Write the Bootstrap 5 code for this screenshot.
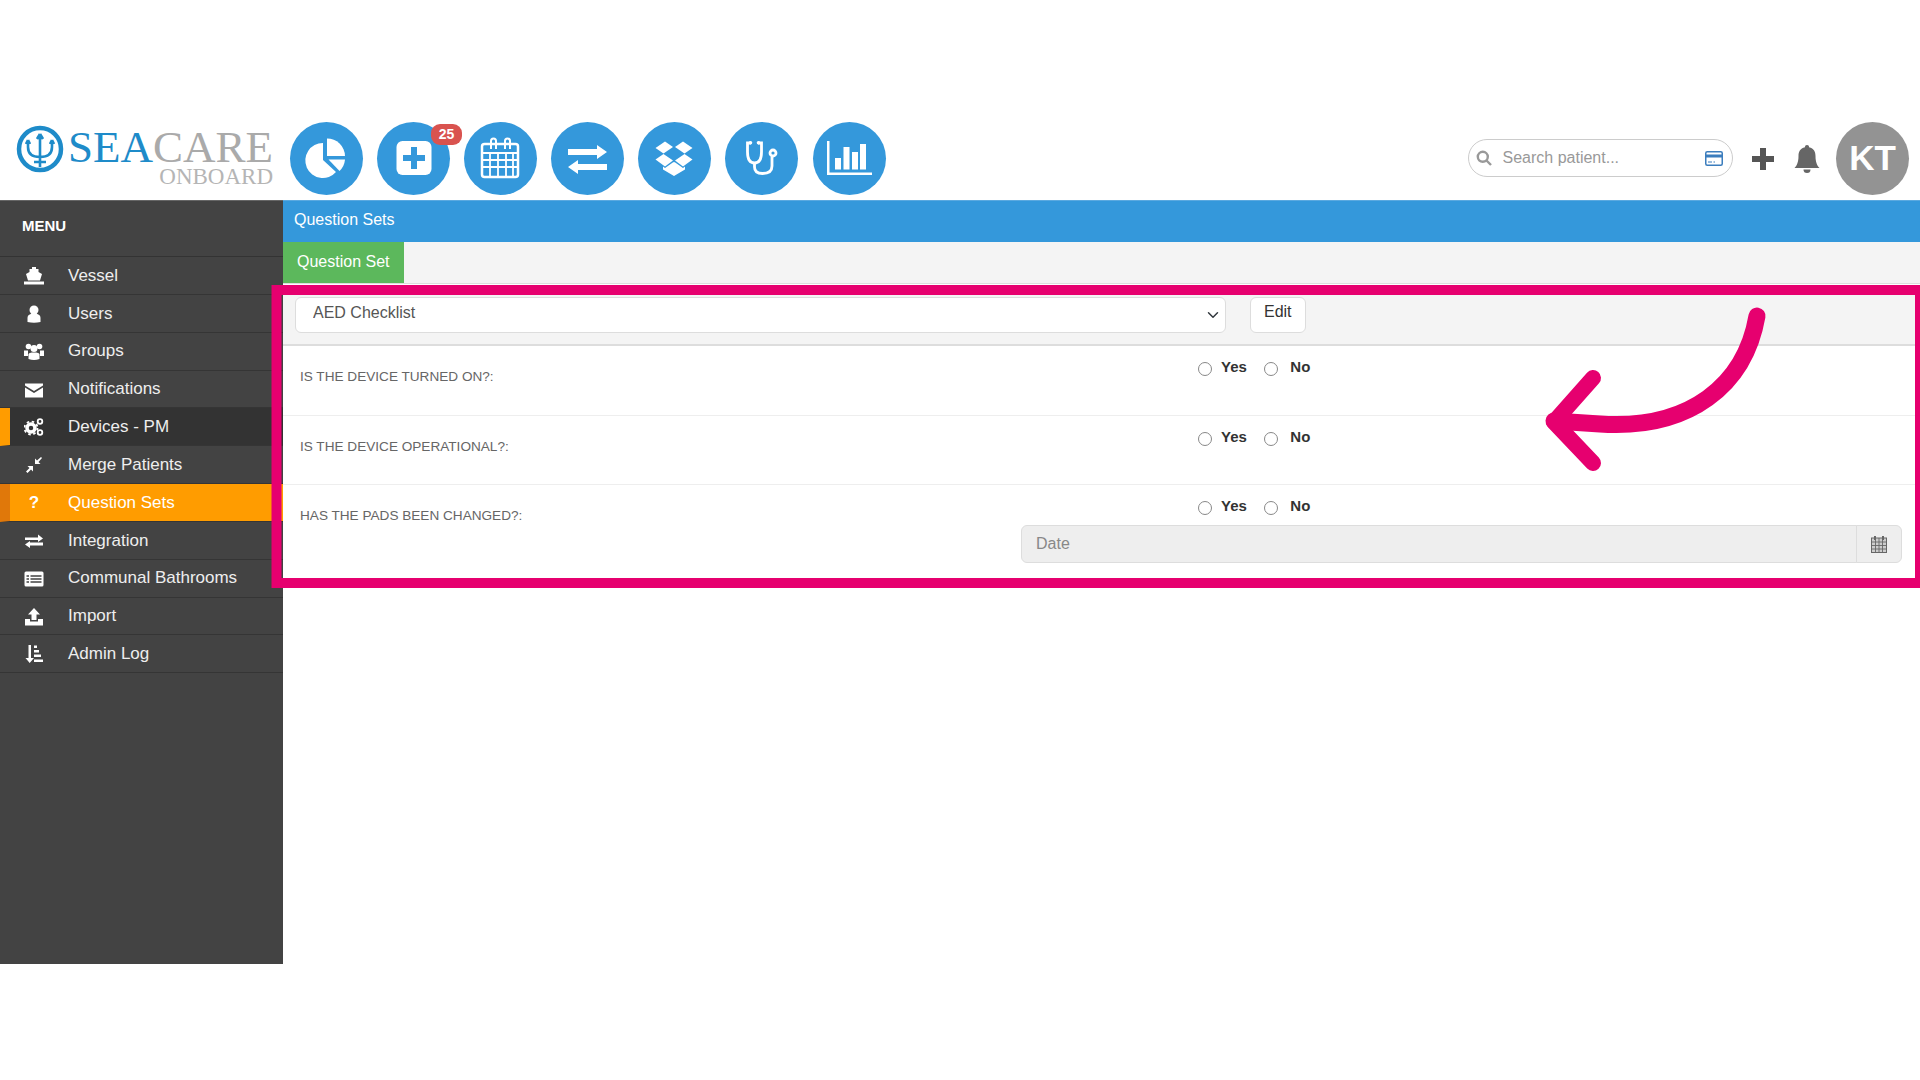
<!DOCTYPE html>
<html lang="en">
<head>
    <meta charset="UTF-8">
    <meta name="viewport" content="width=device-width, initial-scale=1.0">
    <title>Question Sets - Seacare Onboard</title>
    <link href="https://cdn.jsdelivr.net/npm/bootstrap@5.3.0/dist/css/bootstrap.min.css" rel="stylesheet">
    <style>
        html, body { height: 100%; }
        body {
            margin: 0;
            background: #fff;
            font-family: "Liberation Sans", Arial, sans-serif;
            overflow: hidden;
        }
        .page-wrap { position: relative; width: 1920px; height: 1080px; }

        /* top header */
        .top-head { height: 200px; padding: 122px 0 0 16px; }
        .brand { width: 258px; height: 64px; margin-right: 16px; flex: none; }
        .brand-mark { width: 48px; height: 48px; flex: none; margin-top: 3px; }
        .brand-text { font-family: "Liberation Serif", serif; line-height: 1; margin-left: 4px; }
        .brand-main { font-size: 45px; height: 43px; margin-top: 3px; white-space: nowrap; }
        .brand-sea { color: #1e8bc9; }
        .brand-care { color: #aaa; }
        .brand-sub { font-size: 23px; color: #b5b5b5; text-align: right; margin-top: -3px; }
        .circle-nav { gap: 14.1px; }
        .circle-btn {
            position: relative;
            width: 73px;
            height: 73px;
            border-radius: 50%;
            background: #3498db;
            flex: none;
        }
        .circle-btn svg { display: block; }
        .count-pill {
            position: absolute;
            top: 2px;
            left: 54px;
            width: 31px;
            height: 21px;
            padding: 0;
            line-height: 21px;
            border-radius: 9px;
            background: #d9534f;
            font-size: 14px;
        }
        .head-right { margin-left: auto; padding-right: 11px; }
        .search-box {
            width: 265px;
            height: 38px;
            border: 1px solid #ccc;
            border-radius: 19px;
            padding: 0 9px 0 7.5px;
            margin-right: 19px;
            margin-top: -1px;
        }
        .search-box input {
            border: 0;
            outline: 0;
            flex: 1;
            min-width: 0;
            margin-left: 8.5px;
            font-size: 16px;
            color: #555;
            background: transparent;
        }
        .search-box input::placeholder { color: #999; opacity: 1; }
        .user-avatar {
            width: 73px;
            height: 73px;
            border-radius: 50%;
            background: #939393;
            color: #fff;
            font-size: 35px;
            font-weight: 700;
            margin-left: 16.500px;
        }

        /* side menu */
        .app-body { height: 764px; border-top: 1px solid #5aa9e0; }
        .side-menu { width: 283px; flex: none; background: #434343; border-top: 1px solid #666; margin-top: -1px; }
        .menu-title {
            height: 56px;
            padding: 14px 0 0 22px;
            color: #fff;
            font-size: 15px;
            font-weight: 700;
            border-bottom: 1px solid #333;
        }
        .menu-link {
            height: 37.85px;
            padding-left: 68px;
            position: relative;
            color: #eee;
            font-size: 17px;
            text-decoration: none;
            border-bottom: 1px solid #353535;
            box-sizing: border-box;
        }
        .menu-link svg, .menu-link .menu-glyph {
            position: absolute;
            left: 24px;
            top: 9px;
            width: 20px;
            height: 20px;
        }
        .menu-glyph { font-size: 17px; font-weight: 700; text-align: center; line-height: 20px; }
        .menu-link.is-dark { background: #333; border-left: 10px solid #ff9c00; padding-left: 58px; }
        .menu-link.is-dark svg { left: 14px; }
        .menu-link.is-active { background: #ff9c00; color: #fff; border-left: 10px solid #e0780a; padding-left: 58px; }
        .menu-link.is-active .menu-glyph { left: 14px; }

        /* content */
        .main-pane { flex: 1; min-width: 0; }
        .title-bar { height: 41px; background: #3498db; color: #fff; font-size: 16px; padding: 7px 0 0 11px; }
        .tab-bar { height: 42px; background: #f4f4f4; border-bottom: 1px solid #ddd; }
        .tab-green {
            display: block;
            width: 120.500px;
            height: 41px;
            line-height: 40px;
            text-align: center;
            background: #5cb85c;
            color: #fff;
            font-size: 16px;
            text-decoration: none;
        }
        .picker-bar {
            margin-top: 2px;
            height: 60px;
            padding: 11px 0 0 12px;
            background: #f4f4f4;
            border-bottom: 2px solid #ddd;
        }
        .picker-bar .form-select {
            width: 931px;
            height: 36px;
            padding: 0 36px 4px 17px;
            font-size: 16px;
            color: #555;
            border-color: #ddd;
            background-position: right 4.500px center;
        }
        .picker-bar .btn {
            width: 56.500px;
            height: 36px;
            margin-left: 23.500px;
            padding: 0 0 6px;
            font-size: 16px;
            color: #333;
            background: #fff;
            border-color: #ddd;
        }
        .q-row { display: flex; padding-top: 9px; height: 70px; border-bottom: 1px solid #eee; }
        .q-row-mid { height: 69px; }
        .q-row-last { height: 94px; border-bottom: 0; }
        .q-label {
            width: 738px;
            flex: none;
            padding: 14px 0 0 17px;
            font-size: 13.600px;
            line-height: 16px;
            color: #666;
        }
        .q-answer { flex: 1; padding-right: 18px; }
        .radio-line { padding-left: 177px; height: 20px; margin-bottom: 11px; }
        .radio-line .form-check-inline { padding-left: 23px; margin: 0 13px 0 0; min-height: 0; line-height: 18px; }
        .radio-line .form-check-inline:last-child { padding-left: 26px; }
        .radio-line .form-check-input {
            width: 14px;
            height: 14px;
            margin: 4px 0 0 -23px;
            border-color: #888;
        }
        .radio-line .form-check-inline:last-child .form-check-input { margin-left: -26px; }
        .radio-line .form-check-label { font-size: 15px; font-weight: 700; color: #333; }
        .date-group { height: 38px; }
        .date-group .form-control {
            height: 38px;
            padding-left: 14px;
            font-size: 16px;
            background: #eee;
            border-color: #ddd;
        }
        .date-group .form-control::placeholder { color: #888; opacity: 1; }
        .date-group .input-group-text {
            width: 46px;
            padding: 0;
            justify-content: center;
            background: #eee;
            border-color: #ddd;
        }

        /* annotation drawn on top of the screenshot */
        .markup { position: absolute; left: 0; top: 0; pointer-events: none; }
    </style>
</head>
<body>
<div class="page-wrap">
    <header class="top-head d-flex align-items-start">
        <div class="brand d-flex align-items-start">
            <svg class="brand-mark" viewBox="0 0 48 48" fill="none" stroke="#1e8bc9">
                <circle cx="24" cy="24" r="21" stroke-width="4.5"/>
                <path d="M24 9V42M24 9l-3 5M24 9l3 5M12 15v7c0 7 5 10 12 10s12-3 12-10v-7M12 15l-2 4M12 15l2 4M36 15l-2 4M36 15l2 4M18 37h12" stroke-width="2.6"/>
            </svg>
            <div class="brand-text">
                <div class="brand-main"><span class="brand-sea">SEA</span><span class="brand-care">CARE</span></div>
                <div class="brand-sub">ONBOARD</div>
            </div>
        </div>
        <nav class="circle-nav d-flex">
            <a class="circle-btn" href="#">
                <svg width="73" height="73" viewBox="0 0 73 73" fill="#fff">
                    <path d="M33 21A17.5 17.5 0 1 0 46 50L33 38Z"/>
                    <path d="M37 16.5A18 18 0 0 1 55 34H37Z"/>
                    <path d="M38.500 37.500H55A18 18 0 0 1 49.500 49Z"/>
                </svg>
            </a>
            <a class="circle-btn" href="#">
                <svg width="73" height="73" viewBox="0 0 73 73">
                    <rect x="19.500" y="19" width="35" height="34" rx="6" fill="#fff"/>
                    <path d="M26 36H48M37 25V47" stroke="#3498db" stroke-width="6" fill="none"/>
                </svg>
                <span class="badge count-pill">25</span>
            </a>
            <a class="circle-btn" href="#">
                <svg width="73" height="73" viewBox="0 0 73 73" fill="none" stroke="#fff">
                    <rect x="18" y="22" width="36" height="33" rx="2.500" stroke-width="2.500"/>
                    <path d="M18 31H54M18 38H54M18 45H54M26 31V54M34 31V54M42 31V54M49 31V54" stroke-width="1.800"/>
                    <path d="M27 27V19a2.500 2.500 0 0 1 5 0V27M41 27V19a2.500 2.500 0 0 1 5 0V27" stroke-width="2"/>
                </svg>
            </a>
            <a class="circle-btn" href="#">
                <svg width="73" height="73" viewBox="0 0 73 73" fill="#fff">
                    <path d="M17 27H46V23L56 30L46 37V33H17Z"/>
                    <path d="M56 42H27V38L17 45L27 52V48H56Z"/>
                </svg>
            </a>
            <a class="circle-btn" href="#">
                <svg width="73" height="73" viewBox="0 0 73 73" fill="#fff">
                    <path d="M17.500 26L27 19.500L35 25L25.500 31.500Z"/>
                    <path d="M37 25L45 19.500L54.500 26L46.500 31.500Z"/>
                    <path d="M17.500 37.500L25.500 32L35 38.500L27 44.500Z"/>
                    <path d="M37 38.500L46.500 32L54.500 37.500L45 44.500Z"/>
                    <path d="M25 44.500L27 46L35.500 40L36 40.500L36.500 40L45 46L47 44.500V47.500L36 54L25 47.500Z"/>
                </svg>
            </a>
            <a class="circle-btn" href="#">
                <svg width="73" height="73" viewBox="0 0 73 73" fill="none" stroke="#fff" stroke-width="2.800">
                    <path d="M26 21H22.500V30Q22.500 41 29.500 41Q36.500 41 36.500 30V21H33"/>
                    <circle cx="25.500" cy="20.800" r="1.800" fill="#fff" stroke="none"/>
                    <circle cx="33.500" cy="20.800" r="1.800" fill="#fff" stroke="none"/>
                    <path d="M29.500 41V45Q29.500 51.500 37.500 51.500Q47 51.500 47 44V34.500"/>
                    <circle cx="48" cy="31" r="3"/>
                </svg>
            </a>
            <a class="circle-btn" href="#">
                <svg width="73" height="73" viewBox="0 0 73 73" fill="#fff">
                    <path d="M14 19H16.500V50.500H59V53H14Z"/>
                    <rect x="22" y="36" width="6" height="11.500"/>
                    <rect x="30.500" y="25" width="6" height="22.500"/>
                    <rect x="39" y="30" width="6" height="17.500"/>
                    <rect x="47" y="22" width="6" height="25.500"/>
                </svg>
            </a>
        </nav>
        <div class="head-right d-flex align-items-center">
            <div class="search-box d-flex align-items-center">
                <svg width="16" height="16" viewBox="0 0 16 16" fill="none" stroke="#999" stroke-width="2.400">
                    <circle cx="6.800" cy="6.800" r="5"/><path d="M10.500 10.500L15 15"/>
                </svg>
                <input type="text" placeholder="Search patient...">
                <svg width="18" height="15" viewBox="0 0 18 15">
                    <rect x=".75" y=".75" width="16.500" height="13.500" rx="1.500" fill="#fff" stroke="#3b7dbd" stroke-width="1.500"/>
                    <rect x="1" y="3.500" width="16" height="3" fill="#3b7dbd"/>
                    <path d="M3 11H7M8.500 11H10" stroke="#3b7dbd"/>
                </svg>
            </div>
            <svg class="me-3" width="22" height="22" viewBox="0 0 22 22" fill="#555">
                <path d="M8 0H14V8H22V14H14V22H8V14H0V8H8Z"/>
            </svg>
            <svg class="ms-1" width="26" height="28" viewBox="0 0 26 28" fill="#666">
                <path d="M13 0a2 2 0 0 1 2 2.300C20 3.300 21.500 7 21.500 11c0 6 1.500 9.500 4 12H.5c2.500-2.500 4-6 4-12 0-4 1.500-7.700 6.500-8.700A2 2 0 0 1 13 0Z"/>
                <path d="M9.500 24.500h7a3.500 3.500 0 0 1-7 0Z"/>
            </svg>
            <div class="user-avatar d-flex align-items-center justify-content-center">KT</div>
        </div>
    </header>

    <div class="app-body d-flex">
        <aside class="side-menu">
            <div class="menu-title">MENU</div>
            <a href="#" class="menu-link d-flex align-items-center">
                <svg viewBox="0 0 20 20" fill="#fff"><path d="M8 1H12V3H14.500V6L18 8L16 14.500H4L2 8L5.500 6V3H8Z"/><path d="M0 15.500H20V18.500H0Z"/></svg>
                Vessel
            </a>
            <a href="#" class="menu-link d-flex align-items-center">
                <svg viewBox="0 0 20 20" fill="#fff"><circle cx="10" cy="6" r="4.500"/><path d="M3.500 18V14C3.500 11 6 9.500 10 9.500S16.500 11 16.500 14V18Q10 19.500 3.500 18Z"/></svg>
                Users
            </a>
            <a href="#" class="menu-link d-flex align-items-center">
                <svg viewBox="0 0 20 20" fill="#fff"><circle cx="4.500" cy="4.500" r="2.800"/><circle cx="15.500" cy="4.500" r="2.800"/><circle cx="10" cy="6.500" r="3.500"/><path d="M0 8.500H4V14H0ZM16 8.500H20V14H16Z"/><path d="M4.500 17V12.500C4.500 11 6.500 10.500 10 10.500S15.500 11 15.500 12.500V17Q10 19 4.500 17Z"/></svg>
                Groups
            </a>
            <a href="#" class="menu-link d-flex align-items-center">
                <svg viewBox="0 0 20 20" fill="#fff"><path d="M1 3.500H19V5.500L10 11L1 5.500Z"/><path d="M1 7.500L10 13L19 7.500V17.500H1Z"/></svg>
                Notifications
            </a>
            <a href="#" class="menu-link is-dark d-flex align-items-center">
                <svg viewBox="0 0 20 20"><circle cx="7" cy="11" r="4" fill="none" stroke="#fff" stroke-width="3.500"/><circle cx="7" cy="11" r="6.500" fill="none" stroke="#fff" stroke-width="1.800" stroke-dasharray="2.500 2.600"/><circle cx="16" cy="4.500" r="2.300" fill="none" stroke="#fff" stroke-width="1.800"/><circle cx="16" cy="15.500" r="2.300" fill="none" stroke="#fff" stroke-width="1.800"/></svg>
                Devices - PM
            </a>
            <a href="#" class="menu-link d-flex align-items-center">
                <svg viewBox="0 0 20 20" fill="#fff"><path d="M11 3.500V9H16.500L14.500 7L18 3L17 2L13 5.500Z"/><path d="M9 11V16.500L7 14.500L3.500 18L2 16.500L5.500 13L3.500 11Z"/></svg>
                Merge Patients
            </a>
            <a href="#" class="menu-link is-active d-flex align-items-center">
                <span class="menu-glyph">?</span>
                Question Sets
            </a>
            <a href="#" class="menu-link d-flex align-items-center">
                <svg viewBox="0 0 20 20" fill="#fff"><path d="M1 6.500H14V3.500L19 7.500L14 11V9H1Z"/><path d="M19 11.500H6V10L1 13.500L6 17V14.500H19Z"/></svg>
                Integration
            </a>
            <a href="#" class="menu-link d-flex align-items-center">
                <svg viewBox="0 0 20 20"><rect x=".5" y="2.500" width="19" height="15" rx="1.500" fill="#fff"/><path d="M2.500 7H5M6.500 7H17.500M2.500 10H5M6.500 10H17.500M2.500 13H5M6.500 13H17.500" stroke="#434343" stroke-width="1.300"/></svg>
                Communal Bathrooms
            </a>
            <a href="#" class="menu-link d-flex align-items-center">
                <svg viewBox="0 0 20 20" fill="#fff"><path d="M10 1L16 7.500H12.500V13H7.500V7.500H4Z"/><path d="M1 12H6V14.500H14V12H19V18.500H1Z"/></svg>
                Import
            </a>
            <a href="#" class="menu-link d-flex align-items-center">
                <svg viewBox="0 0 20 20" fill="#fff"><path d="M4.500 1H7V14H10L5.700 19L1.500 14H4.500Z"/><path d="M10 1.500H13V4H10ZM10 6H15V8.500H10ZM10 10.500H17V13H10ZM10 15.500H19V18H10Z"/></svg>
                Admin Log
            </a>
        </aside>

        <main class="main-pane">
            <div class="title-bar">Question Sets</div>
            <div class="tab-bar"><a href="#" class="tab-green">Question Set</a></div>
            <div class="picker-bar d-flex align-items-start">
                <select class="form-select"><option>AED Checklist</option></select>
                <button type="button" class="btn">Edit</button>
            </div>
            <div class="q-row">
                <div class="q-label">IS THE DEVICE TURNED ON?:</div>
                <div class="q-answer">
                    <div class="radio-line">
                        <div class="form-check form-check-inline"><input class="form-check-input" type="radio" name="q1" id="q1y"><label class="form-check-label" for="q1y">Yes</label></div>
                        <div class="form-check form-check-inline"><input class="form-check-input" type="radio" name="q1" id="q1n"><label class="form-check-label" for="q1n">No</label></div>
                    </div>
                </div>
            </div>
            <div class="q-row q-row-mid">
                <div class="q-label">IS THE DEVICE OPERATIONAL?:</div>
                <div class="q-answer">
                    <div class="radio-line">
                        <div class="form-check form-check-inline"><input class="form-check-input" type="radio" name="q2" id="q2y"><label class="form-check-label" for="q2y">Yes</label></div>
                        <div class="form-check form-check-inline"><input class="form-check-input" type="radio" name="q2" id="q2n"><label class="form-check-label" for="q2n">No</label></div>
                    </div>
                </div>
            </div>
            <div class="q-row q-row-last">
                <div class="q-label">HAS THE PADS BEEN CHANGED?:</div>
                <div class="q-answer">
                    <div class="radio-line">
                        <div class="form-check form-check-inline"><input class="form-check-input" type="radio" name="q3" id="q3y"><label class="form-check-label" for="q3y">Yes</label></div>
                        <div class="form-check form-check-inline"><input class="form-check-input" type="radio" name="q3" id="q3n"><label class="form-check-label" for="q3n">No</label></div>
                    </div>
                    <div class="input-group date-group">
                        <input type="text" class="form-control" placeholder="Date" disabled>
                        <span class="input-group-text">
                            <svg width="16" height="18" viewBox="0 0 16 18" fill="none" stroke="#666">
                                <rect x=".5" y="3" width="15" height="14.500" fill="#ccc"/>
                                <path d="M.5 7H15.500M.5 10.500H15.500M.5 14H15.500M4.500 3V17.500M8 3V17.500M11.500 3V17.500" stroke-width=".9"/>
                                <path d="M4 1V5M12 1V5" stroke-width="2"/>
                            </svg>
                        </span>
                    </div>
                </div>
            </div>
        </main>
    </div>

    <!-- highlight box and arrow on top of the page -->
    <svg class="markup" width="1920" height="1080" viewBox="0 0 1920 1080" fill="none" stroke="#e6006f">
        <rect x="276.500" y="290" width="1643.500" height="293" stroke-width="10"/>
        <path d="M1757 316C1745 385 1690 430 1600 424L1554 421" stroke-width="17" stroke-linecap="round"/>
        <path d="M1593 378L1554 422L1593 463" stroke-width="16" stroke-linecap="round" stroke-linejoin="round"/>
    </svg>
</div>
<script src="https://cdn.jsdelivr.net/npm/bootstrap@5.3.0/dist/js/bootstrap.bundle.min.js"></script>
</body>
</html>
